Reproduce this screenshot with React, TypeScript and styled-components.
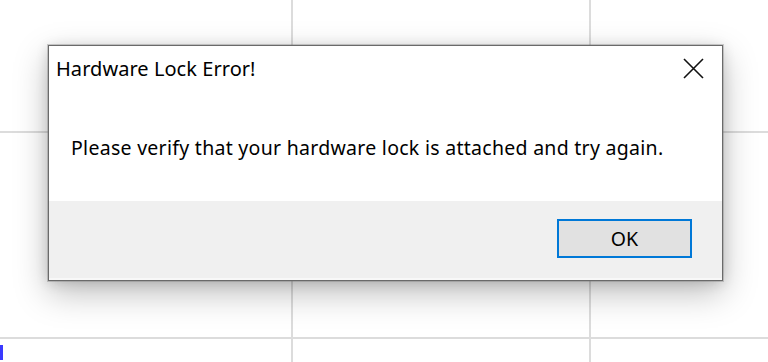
import React from "react";
import styled, { createGlobalStyle } from "styled-components";

const Global = createGlobalStyle`
  html, body { margin: 0; padding: 0; background: #ffffff; }
  body { font-family: "Segoe UI", "Noto Sans", "Open Sans", sans-serif; }
  #root { width: 768px; height: 362px; overflow: hidden; }
`;

const Screen = styled.div`
  position: relative;
  width: 768px;
  height: 362px;
  overflow: hidden;
  background: #ffffff;
`;

const Sheet = styled.div`
  display: grid;
  grid-template-columns: 293px 298px 1fr;
  grid-template-rows: 133px 206px 1fr;
  width: 100%;
  height: 100%;
`;

const Cell = styled.div<{ $lastCol?: boolean; $lastRow?: boolean }>`
  box-sizing: border-box;
  border-right: ${(p) => (p.$lastCol ? "none" : "2px solid #dcdcdc")};
  border-bottom: ${(p) => (p.$lastRow ? "none" : "2px solid #dcdcdc")};
  padding-top: 6px;
`;

const LinkMark = styled.div`
  width: 3px;
  height: 15px;
  background: #3a3aff;
`;

const Dialog = styled.div`
  position: absolute;
  left: 48px;
  top: 45px;
  width: 675px;
  height: 236px;
  box-sizing: border-box;
  display: flex;
  flex-direction: column;
  background: #ffffff;
  border: 1px solid #6a6a6a;
  box-shadow: 0 0 0 1px rgba(120, 120, 120, 0.35), 0 12px 32px rgba(0, 0, 0, 0.26),
    0 2px 12px rgba(0, 0, 0, 0.14);
`;

const TitleBar = styled.div`
  height: 44px;
  display: flex;
  align-items: center;
  justify-content: space-between;
  padding: 0 18px 0 7px;
`;

const Title = styled.div`
  font-size: 20px;
  color: #000;
  letter-spacing: 0.05px;
`;

const CloseButton = styled.div`
  width: 22px;
  height: 22px;
  display: flex;
  align-items: center;
  justify-content: center;
`;

const Body = styled.div`
  height: 111px;
  box-sizing: border-box;
  padding: 46px 0 0 22px;
`;

const Message = styled.div`
  font-size: 19.5px;
  line-height: 24px;
  color: #000;
  letter-spacing: 0.28px;
`;

const Footer = styled.div`
  flex: 1;
  background: #f0f0f0;
  border-bottom: 2px solid #f8f8f8;
  display: flex;
  justify-content: flex-end;
  align-items: flex-start;
  padding: 18px 30px 0 0;
`;

const OkButton = styled.button`
  width: 135px;
  height: 39px;
  box-sizing: border-box;
  background: #e1e1e1;
  border: 2px solid #0078d7;
  box-shadow: inset 0 0 0 1px #e1e1e1;
  font-family: inherit;
  font-size: 19.5px;
  color: #000;
  padding: 0;
  display: flex;
  align-items: center;
  justify-content: center;
`;

export default function App() {
  return (
    <>
      <Global />
      <Screen>
        <Sheet>
          <Cell />
          <Cell />
          <Cell $lastCol />
          <Cell />
          <Cell />
          <Cell $lastCol />
          <Cell $lastRow>
            <LinkMark />
          </Cell>
          <Cell $lastRow />
          <Cell $lastRow $lastCol />
        </Sheet>
        <Dialog>
          <TitleBar>
            <Title>Hardware Lock Error!</Title>
            <CloseButton>
              <svg width="21" height="21" viewBox="0 0 21 21">
                <path d="M1 1 L20 20 M20 1 L1 20" stroke="#111" strokeWidth="1.6" fill="none" />
              </svg>
            </CloseButton>
          </TitleBar>
          <Body>
            <Message>Please verify that your hardware lock is attached and try again.</Message>
          </Body>
          <Footer>
            <OkButton>OK</OkButton>
          </Footer>
        </Dialog>
      </Screen>
    </>
  );
}
